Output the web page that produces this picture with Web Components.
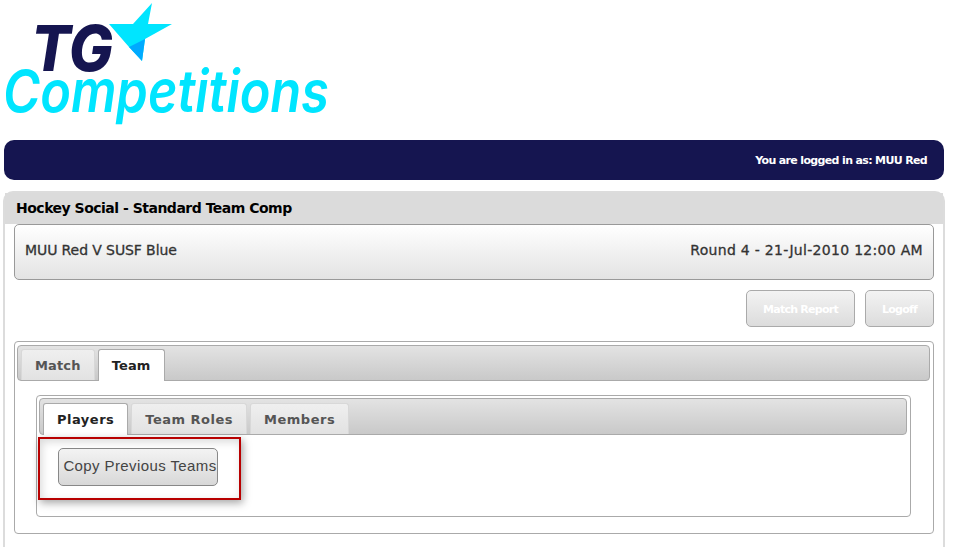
<!DOCTYPE html>
<html>
<head>
<meta charset="utf-8">
<title>TG Competitions</title>
<style>
    html, body { margin: 0; height: 547px; overflow: hidden; background: #fff; }
    body { font-family: "DejaVu Sans", Verdana, sans-serif; }
</style>
</head>
<body>
<tg-page>
    <tg-logo></tg-logo>
    <tg-userbar>You are logged in as: MUU Red</tg-userbar>
    <tg-panel heading="Hockey Social - Standard Team Comp">
        <tg-match-header round="Round 4 - 21-Jul-2010 12:00 AM">MUU Red V SUSF Blue</tg-match-header>
        <tg-actions>
            <tg-action style="width:109px">Match Report</tg-action>
            <tg-action style="width:69px">Logoff</tg-action>
        </tg-actions>
        <tg-tabs class="outer" tabs="Match,Team" active="Team">
            <tg-tabs class="inner" tabs="Players,Team Roles,Members" active="Players">
                <tg-copy-button>Copy Previous Teams</tg-copy-button>
            </tg-tabs>
        </tg-tabs>
    </tg-panel>
</tg-page>

<script>
class TgPage extends HTMLElement {
    connectedCallback() {
        this.attachShadow({ mode: 'open' });
        this.shadowRoot.innerHTML = `
            <style>
                :host { display: block; padding-left: 3px; width: 942px; }
            </style>
            <slot></slot>
        `;
    }
}

class TgLogo extends HTMLElement {
    connectedCallback() {
        this.attachShadow({ mode: 'open' });
        this.shadowRoot.innerHTML = `
            <style>
                :host { display: block; height: 140px; margin-left: -3px; }
                svg { display: block; }
                text { font-family: Inter, sans-serif; font-style: italic; }
            </style>
            <svg width="440" height="140" viewBox="0 0 440 140">
                <polygon points="152,3 148,24 172,24 145,39 142,61 129,47 109,24 133,24" fill="#00e5ff"/>
                <polygon points="129,47 145,39 142,61" fill="#00aaff"/>
                <text x="31" y="71" font-size="63" font-weight="800" fill="#151550" textLength="82" lengthAdjust="spacingAndGlyphs">TG</text>
                <text x="3" y="112" font-size="58" font-weight="600" fill="#00e5ff" textLength="326" lengthAdjust="spacingAndGlyphs">Competitions</text>
            </svg>
        `;
    }
}

class TgUserbar extends HTMLElement {
    connectedCallback() {
        this.attachShadow({ mode: 'open' });
        this.shadowRoot.innerHTML = `
            <style>
                :host {
                    display: flex;
                    align-items: center;
                    justify-content: flex-end;
                    box-sizing: border-box;
                    height: 40px;
                    margin: 0 1px 11px;
                    padding-right: 17px;
                    border-radius: 10px;
                    background: #151550;
                    color: #fff;
                    font-size: 11px;
                    font-weight: bold;
                    letter-spacing: -0.65px;
                }
            </style>
            <slot></slot>
        `;
    }
}

class TgPanel extends HTMLElement {
    connectedCallback() {
        this.attachShadow({ mode: 'open' });
        this.shadowRoot.innerHTML = `
            <style>
                :host {
                    display: block;
                    box-sizing: border-box;
                    height: 356px;
                    border: 2px solid #dcdcdc;
                    border-bottom: 0;
                    border-radius: 10px 10px 0 0;
                }
                .title {
                    height: 31px;
                    padding-left: 11px;
                    background: #dbdbdb;
                    color: #000;
                    font-size: 14px;
                    font-weight: bold;
                    line-height: 31px;
                    letter-spacing: -0.5px;
                }
                .body { padding: 0 9px; }
            </style>
            <div class="title"></div>
            <div class="body"><slot></slot></div>
        `;
        this.shadowRoot.querySelector('.title').textContent = this.getAttribute('heading');
    }
}

class TgMatchHeader extends HTMLElement {
    connectedCallback() {
        this.attachShadow({ mode: 'open' });
        this.shadowRoot.innerHTML = `
            <style>
                :host {
                    display: flex;
                    align-items: center;
                    justify-content: space-between;
                    box-sizing: border-box;
                    height: 56px;
                    padding: 0 10px 4px;
                    border: 1px solid #999;
                    border-radius: 5px;
                    background: linear-gradient(#fff, #e3e3e3);
                    color: #333;
                    font-size: 14px;
                    letter-spacing: -0.1px;
                    -webkit-text-stroke: 0.3px #333;
                }
                .round { letter-spacing: 0.3px; }
            </style>
            <span><slot></slot></span>
            <span class="round"></span>
        `;
        this.shadowRoot.querySelector('.round').textContent = this.getAttribute('round');
    }
}

class TgActions extends HTMLElement {
    connectedCallback() {
        this.attachShadow({ mode: 'open' });
        this.shadowRoot.innerHTML = `
            <style>
                :host {
                    display: flex;
                    justify-content: flex-end;
                    gap: 10px;
                    margin: 10px 0 14px;
                }
            </style>
            <slot></slot>
        `;
    }
}

class TgAction extends HTMLElement {
    connectedCallback() {
        this.attachShadow({ mode: 'open' });
        this.shadowRoot.innerHTML = `
            <style>
                :host {
                    display: flex;
                    align-items: center;
                    justify-content: center;
                    box-sizing: border-box;
                    height: 37px;
                    padding-top: 2px;
                    border: 1px solid #aaa;
                    border-radius: 5px;
                    background: linear-gradient(#f3f3f3, #dcdcdc);
                    color: #fff;
                    font-size: 11px;
                    font-weight: bold;
                    letter-spacing: -0.75px;
                }
            </style>
            <slot></slot>
        `;
    }
}

class TgTabs extends HTMLElement {
    connectedCallback() {
        const names = this.getAttribute('tabs').split(',');
        const active = this.getAttribute('active');
        this.attachShadow({ mode: 'open' });
        this.shadowRoot.innerHTML = `
            <style>
                :host {
                    display: block;
                    box-sizing: border-box;
                    padding: 3px 3px 3px 2px;
                    border: 1px solid #aaa;
                    border-radius: 4px;
                    background: #fff;
                }
                :host(.outer) { height: 193px; }
                :host(.inner) {
                    height: 122px;
                    margin: 14px 19px 0;
                    padding-top: 2px;
                    position: relative;
                }
                .strip {
                    display: flex;
                    align-items: flex-end;
                    gap: 3px;
                    box-sizing: border-box;
                    height: 36px;
                    padding: 0 0 0 3px;
                    border: 1px solid #aaa;
                    border-radius: 4px;
                    background: linear-gradient(#e3e3e3, #c9c9c9);
                }
                :host(.inner) .strip { height: 37px; }
                .tab {
                    box-sizing: border-box;
                    height: 31px;
                    padding: 0 13px;
                    border: 1px solid #d8d8d8;
                    border-bottom: 0;
                    border-radius: 3px 3px 0 0;
                    background: linear-gradient(#efefef, #e2e2e2);
                    color: #555;
                    font-size: 13px;
                    font-weight: bold;
                    line-height: 31px;
                    letter-spacing: 0.15px;
                }
                :host(.inner) .tab { letter-spacing: 0.5px; }
                .tab.on {
                    height: 32px;
                    margin-bottom: -1px;
                    border-color: #aaa;
                    background: #fff;
                    color: #222;
                }
            </style>
            <div class="strip"></div>
            <slot></slot>
        `;
        const strip = this.shadowRoot.querySelector('.strip');
        names.forEach(name => {
            const tab = document.createElement('div');
            tab.className = name === active ? 'tab on' : 'tab';
            tab.textContent = name;
            strip.appendChild(tab);
        });
    }
}

class TgCopyButton extends HTMLElement {
    connectedCallback() {
        this.attachShadow({ mode: 'open' });
        this.shadowRoot.innerHTML = `
            <style>
                :host {
                    display: block;
                    width: fit-content;
                    margin: 13px 0 0 19px;
                }
                .btn {
                    display: flex;
                    align-items: center;
                    justify-content: center;
                    box-sizing: border-box;
                    width: 160px;
                    height: 38px;
                    padding: 0 0 3px 4px;
                    border: 1px solid #888;
                    border-radius: 5px;
                    background: linear-gradient(#f3f3f3, #d8d8d8);
                    color: #444;
                    font-family: "Liberation Sans", Arial, sans-serif;
                    font-size: 15px;
                    letter-spacing: 0.4px;
                    white-space: nowrap;
                }
                /* red highlight drawn over the screenshot */
                .mark {
                    position: absolute;
                    left: 1px;
                    top: 41px;
                    box-sizing: border-box;
                    width: 203px;
                    height: 63px;
                    border: 2px solid #b80000;
                    box-shadow: 2px 3px 8px rgba(0, 0, 0, 0.35), inset 2px 3px 8px rgba(0, 0, 0, 0.15);
                    pointer-events: none;
                }
            </style>
            <div class="btn"><slot></slot></div>
            <div class="mark"></div>
        `;
    }
}

customElements.define('tg-page', TgPage);
customElements.define('tg-logo', TgLogo);
customElements.define('tg-userbar', TgUserbar);
customElements.define('tg-panel', TgPanel);
customElements.define('tg-match-header', TgMatchHeader);
customElements.define('tg-actions', TgActions);
customElements.define('tg-action', TgAction);
customElements.define('tg-tabs', TgTabs);
customElements.define('tg-copy-button', TgCopyButton);
</script>
</body>
</html>
